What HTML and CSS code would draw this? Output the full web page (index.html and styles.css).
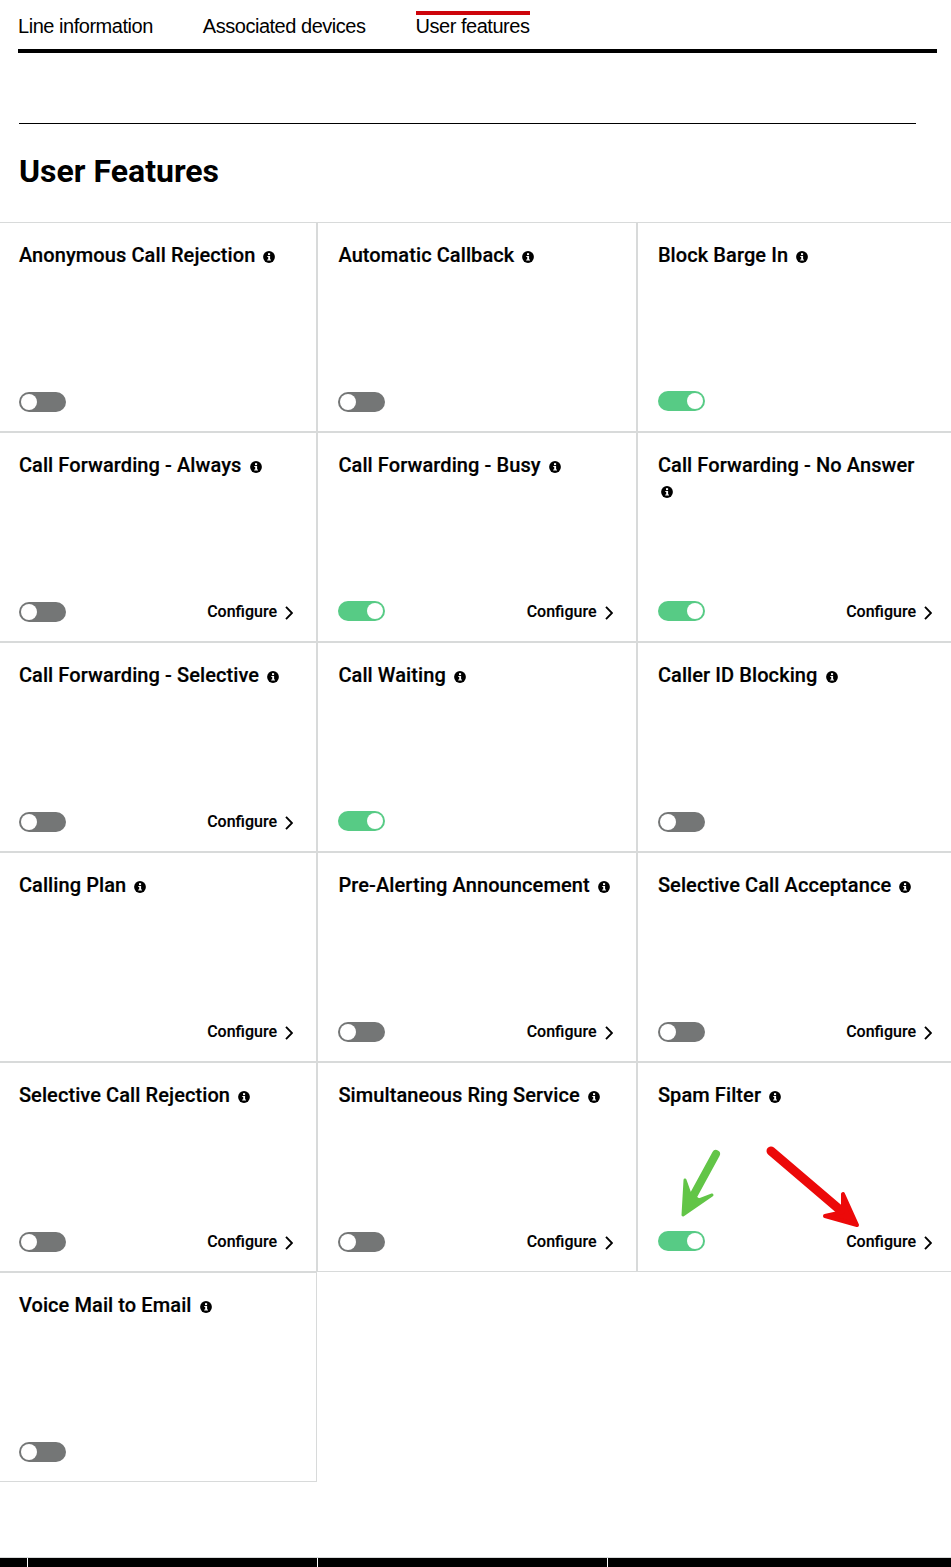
FILE: index.html
```html
<!DOCTYPE html>
<html lang="en">
<head>
<meta charset="utf-8">
<title>User features</title>
<link rel="stylesheet" href="styles.css">
</head>
<body>
<div class="page">
  <nav class="tabs">
    <a class="tab">Line information</a>
    <a class="tab">Associated devices</a>
    <a class="tab active">User features</a>
  </nav>
  <hr class="rule">
  <h1 class="title">User Features</h1>
  <section class="grid">
    <article class="card"><h2 class="name">Anonymous Call Rejection <svg class="info" viewBox="0 0 12 12"><use href="#i"/></svg></h2><div class="foot"><span class="toggle"></span></div></article>
    <article class="card"><h2 class="name">Automatic Callback <svg class="info" viewBox="0 0 12 12"><use href="#i"/></svg></h2><div class="foot"><span class="toggle"></span></div></article>
    <article class="card"><h2 class="name">Block Barge In <svg class="info" viewBox="0 0 12 12"><use href="#i"/></svg></h2><div class="foot"><span class="toggle on"></span></div></article>

    <article class="card"><h2 class="name">Call Forwarding - Always <svg class="info" viewBox="0 0 12 12"><use href="#i"/></svg></h2><div class="foot"><span class="toggle"></span><a class="cfg">Configure<svg class="chev" viewBox="0 0 8 14"><path d="M1 .8l6 6.2-6 6.2"/></svg></a></div></article>
    <article class="card"><h2 class="name">Call Forwarding - Busy <svg class="info" viewBox="0 0 12 12"><use href="#i"/></svg></h2><div class="foot"><span class="toggle on"></span><a class="cfg">Configure<svg class="chev" viewBox="0 0 8 14"><path d="M1 .8l6 6.2-6 6.2"/></svg></a></div></article>
    <article class="card"><h2 class="name">Call Forwarding - No Answer <svg class="info" viewBox="0 0 12 12"><use href="#i"/></svg></h2><div class="foot"><span class="toggle on"></span><a class="cfg">Configure<svg class="chev" viewBox="0 0 8 14"><path d="M1 .8l6 6.2-6 6.2"/></svg></a></div></article>

    <article class="card"><h2 class="name">Call Forwarding - Selective <svg class="info" viewBox="0 0 12 12"><use href="#i"/></svg></h2><div class="foot"><span class="toggle"></span><a class="cfg">Configure<svg class="chev" viewBox="0 0 8 14"><path d="M1 .8l6 6.2-6 6.2"/></svg></a></div></article>
    <article class="card"><h2 class="name">Call Waiting <svg class="info" viewBox="0 0 12 12"><use href="#i"/></svg></h2><div class="foot"><span class="toggle on"></span></div></article>
    <article class="card"><h2 class="name">Caller ID Blocking <svg class="info" viewBox="0 0 12 12"><use href="#i"/></svg></h2><div class="foot"><span class="toggle"></span></div></article>

    <article class="card"><h2 class="name">Calling Plan <svg class="info" viewBox="0 0 12 12"><use href="#i"/></svg></h2><div class="foot foot-end"><a class="cfg">Configure<svg class="chev" viewBox="0 0 8 14"><path d="M1 .8l6 6.2-6 6.2"/></svg></a></div></article>
    <article class="card"><h2 class="name">Pre-Alerting Announcement <svg class="info" viewBox="0 0 12 12"><use href="#i"/></svg></h2><div class="foot"><span class="toggle"></span><a class="cfg">Configure<svg class="chev" viewBox="0 0 8 14"><path d="M1 .8l6 6.2-6 6.2"/></svg></a></div></article>
    <article class="card"><h2 class="name">Selective Call Acceptance <svg class="info" viewBox="0 0 12 12"><use href="#i"/></svg></h2><div class="foot"><span class="toggle"></span><a class="cfg">Configure<svg class="chev" viewBox="0 0 8 14"><path d="M1 .8l6 6.2-6 6.2"/></svg></a></div></article>

    <article class="card"><h2 class="name">Selective Call Rejection <svg class="info" viewBox="0 0 12 12"><use href="#i"/></svg></h2><div class="foot"><span class="toggle"></span><a class="cfg">Configure<svg class="chev" viewBox="0 0 8 14"><path d="M1 .8l6 6.2-6 6.2"/></svg></a></div></article>
    <article class="card"><h2 class="name">Simultaneous Ring Service <svg class="info" viewBox="0 0 12 12"><use href="#i"/></svg></h2><div class="foot"><span class="toggle"></span><a class="cfg">Configure<svg class="chev" viewBox="0 0 8 14"><path d="M1 .8l6 6.2-6 6.2"/></svg></a></div></article>
    <article class="card"><h2 class="name">Spam Filter <svg class="info" viewBox="0 0 12 12"><use href="#i"/></svg></h2><div class="foot"><span class="toggle on"></span><a class="cfg">Configure<svg class="chev" viewBox="0 0 8 14"><path d="M1 .8l6 6.2-6 6.2"/></svg></a></div>
      <svg class="arrows" viewBox="0 0 225 110">
        <path class="arrow-green" d="M77 12L53 56"/>
        <path class="arrow-green-head" d="M44 73L46 38L51 52L60 58L73 53Z"/>
        <path class="arrow-red" d="M132 9L207 73"/>
        <path class="arrow-red-head" d="M218 83L204 52L204 70L186 74Z"/>
      </svg>
    </article>

    <article class="card"><h2 class="name">Voice Mail to Email <svg class="info" viewBox="0 0 12 12"><use href="#i"/></svg></h2><div class="foot"><span class="toggle"></span></div></article>
  </section>
  <footer class="footer"><span class="seg seg-a"></span><span class="seg seg-b"></span><span class="seg seg-b"></span><span class="seg seg-c"></span></footer>
</div>
<svg class="defs" width="0" height="0"><defs><g id="i"><circle cx="6" cy="6" r="5.9" fill="#000"/><rect x="5" y="2.2" width="2.1" height="1.9" fill="#fff"/><path d="M4.3 5h2.8v3.4h.9v1.1H4.2V8.4h1V6.1h-.9z" fill="#fff"/></g></defs></svg>
</body>
</html>
```
FILE: styles.css
```css
* { box-sizing: border-box; }
html, body { margin: 0; padding: 0; background: #fff; }
body { width: 951px; height: 1567px; overflow: hidden; font-family: Roboto, "Liberation Sans", sans-serif; color: #000; }
.page { display: flex; flex-direction: column; height: 1567px; }
.tabs { display: flex; gap: 50px; margin: 11px 14px 0 18px; height: 42px; border-bottom: 4px solid #000; }
.tab { font-family: "Liberation Sans", Arial, sans-serif; font-size: 20px; line-height: 22px; letter-spacing: -0.47px; height: 34px; border-top: 4px solid transparent; }
.tab.active { border-top-color: #cd040b; }
.rule { margin: 70px 35px 0 19px; height: 1px; border: 0; background: #000; }
.title { margin: 28px 0 0 19px; font-size: 32px; line-height: 38px; font-weight: 700; height: 70px; }
.grid { display: grid; grid-template-columns: repeat(3, 319.5px); grid-auto-rows: 210px; margin-left: -2.5px; }
.card { position: relative; display: flex; flex-direction: column; justify-content: space-between; padding: 20px 23px 18px 20.4px; border: 1px solid #d8dada; }
.name { margin: 0; font-size: 20px; line-height: 25px; font-weight: 500; letter-spacing: 0.09px; -webkit-text-stroke: 0.2px #000; }
.info { width: 12px; height: 12px; margin-left: 3px; vertical-align: -1px; }
.foot { display: flex; justify-content: space-between; align-items: center; height: 22px; }
.foot-end { justify-content: flex-end; }
.toggle { position: relative; width: 47px; height: 20px; border-radius: 10px; background: #747676; }
.toggle::after { content: ""; position: absolute; left: 2px; top: 2px; width: 16px; height: 16px; border-radius: 50%; background: #fff; }
.toggle.on { background: #57cb85; top: -1px; }
.toggle.on::after { left: auto; right: 2px; }
.cfg { display: flex; align-items: center; margin-bottom: 2px; font-size: 16px; font-weight: 500; -webkit-text-stroke: 0.15px #000; }
.chev { width: 8px; height: 14px; margin-left: 8px; margin-top: 4px; fill: none; stroke: #000; stroke-width: 1.9; }
.arrows { position: absolute; left: 1.5px; top: 79px; width: 225px; height: 110px; overflow: visible; fill: none; stroke-linecap: round; stroke-linejoin: round; }
.arrow-green { stroke: #62c547; stroke-width: 8; }
.arrow-green-head { fill: #62c547; stroke: #62c547; stroke-width: 3; }
.arrow-red { stroke: #ec0909; stroke-width: 9; }
.arrow-red-head { fill: #ec0909; stroke: #ec0909; stroke-width: 4; }
.footer { display: flex; gap: 1px; margin-top: auto; height: 10px; border-top: 1px solid #d8dada; }
.seg { background: #000; }
.seg-a { width: 27px; }
.seg-b { width: 289px; }
.seg-c { flex: 1; }
.defs { position: absolute; }
```
